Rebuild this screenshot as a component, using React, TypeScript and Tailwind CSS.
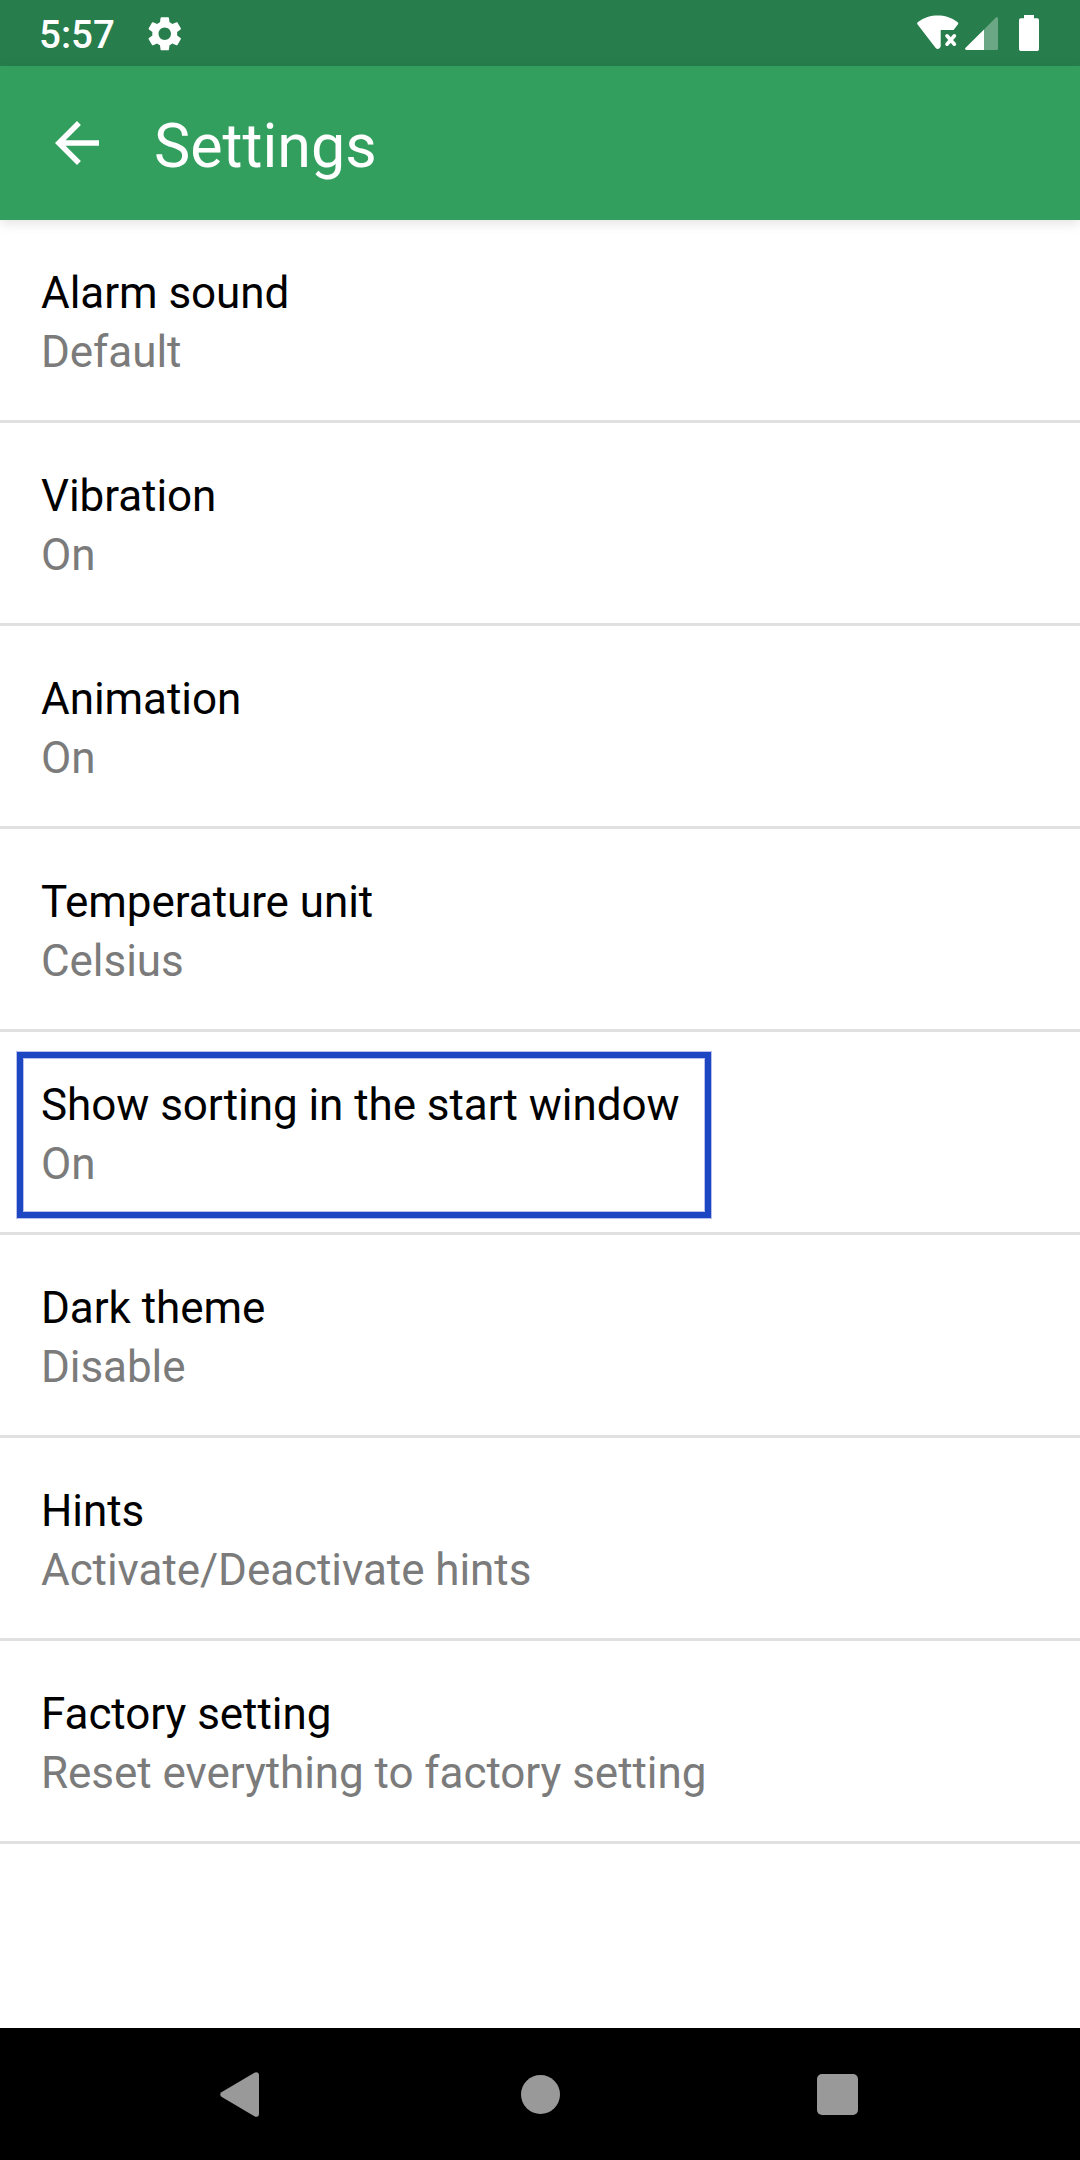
type Setting = { title: string; value: string; highlighted?: boolean };

const settings: Setting[] = [
  { title: "Alarm sound", value: "Default" },
  { title: "Vibration", value: "On" },
  { title: "Animation", value: "On" },
  { title: "Temperature unit", value: "Celsius" },
  { title: "Show sorting in the start window", value: "On", highlighted: true },
  { title: "Dark theme", value: "Disable" },
  { title: "Hints", value: "Activate/Deactivate hints" },
  { title: "Factory setting", value: "Reset everything to factory setting" },
];

function StatusBar() {
  return (
    <div className="flex h-[66px] shrink-0 items-center justify-between bg-[#277e4c] pl-[39px] pr-[41px] text-white">
      <div className="flex items-center pt-[2px]">
        <span className="w-[105px] pt-[2px] text-[38.5px] font-medium leading-[62px]">5:57</span>
        <svg className="h-[41.5px] w-[41.5px]" viewBox="0 0 24 24" fill="currentColor">
          <path d="M19.14 12.94c.04-.3.06-.61.06-.94 0-.32-.02-.64-.07-.94l2.03-1.58a.49.49 0 0 0 .12-.61l-1.92-3.32a.488.488 0 0 0-.59-.22l-2.39.96c-.5-.38-1.03-.7-1.62-.94l-.36-2.54a.484.484 0 0 0-.48-.41h-3.84c-.24 0-.43.17-.47.41l-.36 2.54c-.59.24-1.13.57-1.62.94l-2.39-.96c-.22-.08-.47 0-.59.22L2.74 8.87c-.12.21-.08.47.12.61l2.03 1.58c-.05.3-.09.63-.09.94s.02.64.07.94l-2.03 1.58a.49.49 0 0 0-.12.61l1.92 3.32c.12.22.37.29.59.22l2.39-.96c.5.38 1.03.7 1.62.94l.36 2.54c.05.24.24.41.48.41h3.84c.24 0 .44-.17.47-.41l.36-2.54c.59-.24 1.13-.56 1.62-.94l2.39.96c.22.08.47 0 .59-.22l1.92-3.32c.12-.22.07-.47-.12-.61l-2.01-1.58zM12 15.6c-1.98 0-3.6-1.62-3.6-3.6s1.62-3.6 3.6-3.6 3.6 1.62 3.6 3.6-1.62 3.6-3.6 3.6z" />
        </svg>
      </div>
      <div className="flex h-[66px] items-start pt-[15px]">
        {/* Wi-Fi without a connection */}
        <svg className="h-9 w-[42px]" viewBox="0 0 42 36" fill="currentColor">
          <path d="M.6 9.6C-.2 8.600 0 7.600 1 6.900 7 2.300 14 .4 20.700.4S34.500 2.300 40.400 6.900c1 .7 1.200 1.700.4 2.700L36.600 15H23.700V31.500L22.700 32.900C21.600 34.300 19.800 34.300 18.700 32.900Z" />
          <path d="M30 20.800l7.400 8.400M37.400 20.800L30 29.200" stroke="currentColor" strokeWidth="3.600" strokeLinecap="round" />
        </svg>
        {/* Mobile signal strength */}
        <svg className="ml-[6px] mt-[2px] h-[33px] w-[33px]" viewBox="0 0 33 33" fill="currentColor">
          <path opacity=".32" d="M19 12.500L30.700.7C31.600-.2 33 .2 33 1.600V31.500Q33 33 31.500 33H19Z" />
          <path d="M19 12.500V33H1.500C0 33-.4 31.700.6 30.700Z" />
        </svg>
        <svg className="ml-[21px] h-9 w-5" viewBox="0 0 20 36" fill="currentColor">
          <path d="M5 0H15V3.300H18.300Q20 3.300 20 5V34.300Q20 36 18.300 36H1.700Q0 36 0 34.300V5Q0 3.300 1.700 3.300H5Z" />
        </svg>
      </div>
    </div>
  );
}

function AppBar() {
  return (
    <header className="z-10 flex h-[154px] shrink-0 items-center bg-[#339f5f] pl-11 text-white shadow-[0_3px_12px_rgba(0,0,0,0.12)]">
      <svg className="h-[66px] w-[66px]" viewBox="0 0 24 24" fill="currentColor">
        <path d="M20 11H7.830l5.590-5.590L12 4l-8 8 8 8 1.410-1.410L7.830 13H20v-2z" />
      </svg>
      <h1 className="ml-11 mt-[5px] text-[61px] font-normal leading-[72px]">Settings</h1>
    </header>
  );
}

function SettingRow({ title, value, highlighted }: Setting) {
  return (
    <li className="relative h-[203px] border-b-[3px] border-[#e0e0e0] pl-[41px] pt-11 text-[44px] leading-[59px] tracking-[-0.06px]">
      <div className="text-black">{title}</div>
      <div className="text-[#7b7b7b]">{value}</div>
      {highlighted && (
        <div className="absolute left-[17px] top-5 h-[166px] w-[694px] border-[6px] border-[#1c46c2] shadow-[0_0_0_1px_#b9bfe8,inset_0_0_0_1px_#b9bfe8]" />
      )}
    </li>
  );
}

function NavigationBar() {
  return (
    <nav className="flex h-[132px] shrink-0 items-center bg-black pl-[220px] text-[#999999]">
      <svg className="mt-px h-[45px] w-[39px]" viewBox="0 0 39 45" fill="currentColor">
        <path d="M1.400 20.300L34.400.7C36.600-.6 39 .6 39 3V42C39 44.400 36.600 45.600 34.400 44.300L1.400 24.700C-.1 23.700-.1 21.300 1.400 20.300Z" />
      </svg>
      <div className="ml-[262px] mt-px h-[39px] w-[39px] rounded-full bg-[#999999]" />
      <div className="ml-[257px] mt-px h-[41px] w-[41px] rounded-[5px] bg-[#999999]" />
    </nav>
  );
}

export default function App() {
  return (
    <div className="flex h-[2160px] w-[1080px] flex-col overflow-hidden bg-white font-[Roboto,sans-serif]">
      <StatusBar />
      <AppBar />
      <ul className="flex-1">
        {settings.map((setting) => (
          <SettingRow key={setting.title} {...setting} />
        ))}
      </ul>
      <NavigationBar />
    </div>
  );
}
